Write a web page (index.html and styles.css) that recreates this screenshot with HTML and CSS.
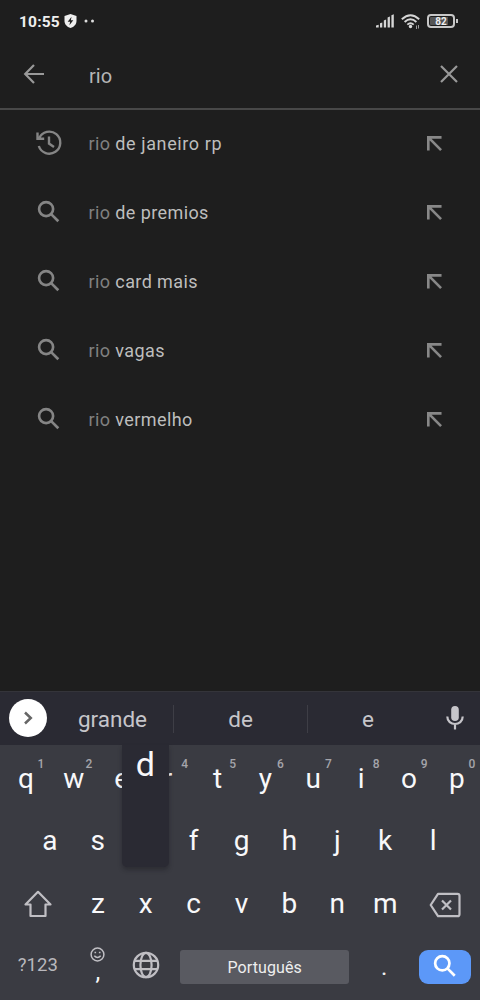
FILE: index.html
```html
<!DOCTYPE html>
<html lang="pt">
<head>
<meta charset="utf-8">
<title>Search</title>
<link rel="stylesheet" href="styles.css">
</head>
<body>
<svg class="defs" width="0" height="0">
  <symbol id="search" viewBox="0 0 24 24"><circle cx="9.500" cy="9.500" r="6.600"/><path d="M14 14l7 7"/></symbol>
  <symbol id="insert" viewBox="0 0 16 16"><path d="M1.400 15.500V1.400H15.500M1.500 1.500L15 15"/></symbol>
</svg>
<div class="phone">
  <header class="status">
    <span class="time">10:55</span>
    <svg class="shield" width="13" height="14" viewBox="0 0 13 14"><path fill="#eee" d="M6.500 0l6 2v5c0 3.400-2.500 5.800-6 7-3.500-1.200-6-3.600-6-7V2z"/><path fill="#222" d="M7.500 2.800L3.700 7.700h2.400l-.7 3.500 3.900-5H6.900z"/></svg>
    <svg class="dots" width="12" height="4" viewBox="0 0 12 4"><circle cx="2" cy="2" r="1.500"/><circle cx="8.500" cy="2" r="1.500"/></svg>
    <svg class="signal" width="18" height="14" viewBox="0 0 18 14"><path d="M0 13.500v-2l2.700-.8v2.800zM4 13.500V9.300l2.300-.9v5.100zM7.800 13.500V6.400l2.300-.9v8zM11.600 13.500V3.500l2.300-1v11zM15.400 13.500V1.300l2.400-1v13.200z"/></svg>
    <svg class="wifi" width="20" height="16" viewBox="0 0 20 16"><g fill="none" stroke="#d6d6d6" stroke-width="1.900"><path d="M.8 5.200Q9.500-2.800 18.200 5.200M3.600 8Q9.500 2.600 15.400 8M6.300 10.600Q9.500 7.800 12.700 10.600"/></g><circle cx="9.500" cy="12.500" r="1.700" fill="#ddd"/><path d="M15.500 11.500v3.500M17.500 11v3.500" stroke="#999"/></svg>
    <span class="battery">82</span>
  </header>
  <div class="searchbar">
    <svg class="back" width="20" height="20" viewBox="0 0 20 20"><path d="M20 10H1.500M10 1L1.200 10 10 19"/></svg>
    <span class="query">rio</span>
    <svg class="clear" width="18" height="18" viewBox="0 0 18 18"><path d="M1 1l16 16M17 1L1 17"/></svg>
  </div>
  <main class="results">
    <div class="result"><span class="lead"><svg class="history" width="26" height="26" viewBox="0 0 26 26"><path d="M3.200 8.200A11 11 0 1 1 2.800 16M1.500 2.500v6.200h6.700M13 6.500v7l5 3.400"/></svg></span><span class="text"><i>rio</i> <b class="wider">de janeiro rp</b></span><svg class="insert"><use href="#insert"/></svg></div>
    <div class="result"><span class="lead"><svg class="mag"><use href="#search"/></svg></span><span class="text"><i>rio</i> de premios</span><svg class="insert"><use href="#insert"/></svg></div>
    <div class="result"><span class="lead"><svg class="mag"><use href="#search"/></svg></span><span class="text"><i>rio</i> card mais</span><svg class="insert"><use href="#insert"/></svg></div>
    <div class="result"><span class="lead"><svg class="mag"><use href="#search"/></svg></span><span class="text"><i>rio</i> vagas</span><svg class="insert"><use href="#insert"/></svg></div>
    <div class="result"><span class="lead"><svg class="mag"><use href="#search"/></svg></span><span class="text"><i>rio</i> vermelho</span><svg class="insert"><use href="#insert"/></svg></div>
  </main>
  <section class="keyboard">
    <div class="suggestions">
      <span class="expand"><svg width="12" height="14" viewBox="0 0 12 14"><path d="M3 1.500L8.800 7 3 12.500"/></svg></span>
      <span class="word first">grande</span><span class="word">de</span><span class="word last">e</span>
      <svg class="mic" width="18" height="24" viewBox="0 0 18 24"><rect x="5.200" y="0" width="7.600" height="15" rx="3.800" fill="#c6c5ca"/><path d="M1.300 10.500C1.300 20.500 16.700 20.500 16.700 10.500M9 18v5.500" fill="none" stroke="#c6c5ca" stroke-width="2.200"/></svg>
    </div>
    <div class="row r1">
      <span class="key">q<sup>1</sup></span><span class="key">w<sup>2</sup></span><span class="key">e</span><span class="key tucked">r<sup>4</sup></span><span class="key">t<sup>5</sup></span><span class="key">y<sup>6</sup></span><span class="key">u<sup>7</sup></span><span class="key">i<sup>8</sup></span><span class="key">o<sup>9</sup></span><span class="key">p<sup>0</sup></span>
    </div>
    <div class="row r2">
      <span class="key">a</span><span class="key">s</span><span class="key pressed"><span class="popup">d</span></span><span class="key">f</span><span class="key">g</span><span class="key">h</span><span class="key">j</span><span class="key">k</span><span class="key">l</span>
    </div>
    <div class="row r3">
      <span class="key wide"><svg width="28" height="28" viewBox="0 0 28 28"><path d="M14 1.800L1.500 14.500h5V26h15V14.500h5z"/></svg></span><span class="key">z</span><span class="key">x</span><span class="key">c</span><span class="key">v</span><span class="key">b</span><span class="key">n</span><span class="key">m</span><span class="key wide"><svg class="erase" width="32" height="26" viewBox="0 0 32 26"><path d="M9 1.800h19.500a2 2 0 0 1 2 2v18.400a2 2 0 0 1-2 2H9L1.700 13zM13 8.500l9 9M22 8.500l-9 9"/></svg></span>
    </div>
    <div class="row r4">
      <span class="key wide sym">?123</span>
      <span class="key comma"><svg width="15" height="15" viewBox="0 0 15 15"><circle cx="7.500" cy="7.500" r="6.400"/><path d="M4.300 8.800q3.200 3.400 6.400 0M4.500 5.500h1.600M8.900 5.500h1.600"/></svg><span>,</span></span>
      <span class="key globe"><svg width="28" height="28" viewBox="0 0 28 28"><circle cx="14" cy="14" r="12.200"/><ellipse cx="14" cy="14" rx="5.600" ry="12.200"/><path d="M3 9.800h22M3 18.200h22"/></svg></span>
      <span class="space">Português</span>
      <span class="dot">.</span>
      <span class="enter"><svg class="go"><use href="#search"/></svg></span>
    </div>
  </section>
</div>
</body>
</html>
```
FILE: styles.css
```css
body { margin: 0; background: #1e1e1e; font-family: Roboto, "Liberation Sans", sans-serif; }
svg { display: block; flex: none; fill: none; overflow: visible; }
.defs { position: absolute; }
.phone { width: 480px; height: 1000px; display: flex; flex-direction: column; overflow: hidden; background: #1e1e1e; }

.status { height: 42px; box-sizing: border-box; display: flex; align-items: center; padding: 0 25px 0 19px; }
.time { width: 45px; padding-top: 2px; font-size: 15.500px; font-weight: 700; letter-spacing: .2px; color: #eee; white-space: nowrap; line-height: 40px; }
.dots { margin-left: 7px; fill: #ddd; }
.signal { margin-left: auto; margin-right: 7px; fill: #d6d6d6; }
.wifi { margin-right: 6px; margin-top: 1px; }
.battery { position: relative; box-sizing: border-box; width: 28px; height: 14px; border: 2px solid #c8c8c8; border-radius: 4px; background: linear-gradient(90deg, #555 80%, #222 80%); background-clip: content-box; padding: 1px; color: #eee; font-size: 10px; font-weight: 700; line-height: 9px; text-align: center; }
.battery::after { content: ""; position: absolute; right: -5px; top: 3px; width: 2px; height: 4px; background: #c8c8c8; }

.searchbar { height: 68px; box-sizing: border-box; border-bottom: 2px solid #484848; display: flex; align-items: center; padding: 0 22px 2px 24px; }
.back, .clear { stroke: #999; stroke-width: 2.200; }
.query { margin-left: 45px; font-size: 20px; line-height: 30px; color: #b5b5b5; padding-top: 3px; }
.clear { margin-left: auto; }

.results { flex: 1; }
.result { height: 68.900px; display: flex; align-items: center; padding-right: 38px; }
.lead { width: 88.500px; box-sizing: border-box; padding-left: 36px; }
.history { stroke: #858585; stroke-width: 2.400; margin-top: -3px; }
.mag { width: 25.500px; height: 25.500px; stroke: #858585; stroke-width: 2.500; margin-top: -3px; }
.text { flex: 1; margin-top: -1px; font-size: 18px; letter-spacing: .4px; color: #bdbdbd; }
.text i { font-style: normal; color: #808080; }
.wider { font-weight: 400; letter-spacing: .6px; }
.insert { width: 15px; height: 15px; stroke: #888; stroke-width: 2.800; margin-top: -1px; }

.keyboard { height: 309px; background: #3a3b42; }
.suggestions { height: 54px; box-sizing: border-box; border-top: 1px solid #34343a; background: #2a2a33; display: flex; align-items: center; padding-left: 9px; }
.expand { width: 38px; height: 38px; border-radius: 50%; background: #fff; display: flex; align-items: center; justify-content: center; margin-top: -2px; }
.expand svg { stroke: #666; stroke-width: 2.500; }
.word { width: 134px; height: 28px; line-height: 29px; box-sizing: border-box; border-right: 1px solid #3e3e46; text-align: center; font-size: 22.500px; color: #c6c5ca; }
.word.first { width: 127px; padding-left: 5px; }
.word.last { width: 120px; border-right: 0; }
.mic { margin-left: 18px; margin-top: -1px; }

.row { display: flex; height: 62.500px; }
.key { position: relative; width: 47.900px; flex: none; display: flex; align-items: center; justify-content: center; font-size: 28px; line-height: 32px; color: #f8f8fa; }
.key sup { position: absolute; right: 5.500px; top: 10px; font-size: 12px; font-weight: 500; line-height: 14px; color: #a5a5ab; }
.r1 { padding: 2px 0 0 2px; }
.r1 .key { height: 63.500px; }
.tucked { box-sizing: border-box; padding-right: 4px; }
.r2, .r3 { padding-left: 2px; }
.r2 { padding-left: 26px; }
.r3 .key { padding-top: 1px; }
.wide { width: 71.900px; }
.key svg { stroke: #c0bfc4; stroke-width: 2.200; stroke-linejoin: round; }
.erase { margin-top: 2px; }
.popup { position: absolute; left: 0; top: -64.500px; width: 47px; height: 122px; border-radius: 0 0 5px 5px; background: #2a2a33; box-shadow: 0 3px 4px rgba(20, 20, 25, .35); font-size: 34px; line-height: 39px; text-align: center; }
.r4 { height: 65.500px; padding-left: 2px; align-items: center; }
.sym { padding-bottom: 4px; font-size: 18.500px; color: #b9b8bd; letter-spacing: .1px; }
.comma { flex-direction: column; height: 40px; justify-content: flex-start; font-size: 24px; line-height: 20px; }
.comma svg { stroke-width: 1.500; }
.globe { padding-bottom: 5px; }
.space { width: 169px; height: 34px; margin-left: 10.500px; border-radius: 3px; background: #595a61; color: #eee; font-size: 16px; line-height: 35px; text-align: center; letter-spacing: .1px; }
.dot { width: 70px; text-align: center; color: #f0f0f0; font-size: 24px; }
.enter { width: 52px; height: 34px; margin-left: -.500px; border-radius: 9px; background: #5c98f8; display: flex; align-items: center; justify-content: center; }
.go { width: 26px; height: 26px; stroke: #fff; stroke-width: 2.500; margin-top: -2px; }
```
